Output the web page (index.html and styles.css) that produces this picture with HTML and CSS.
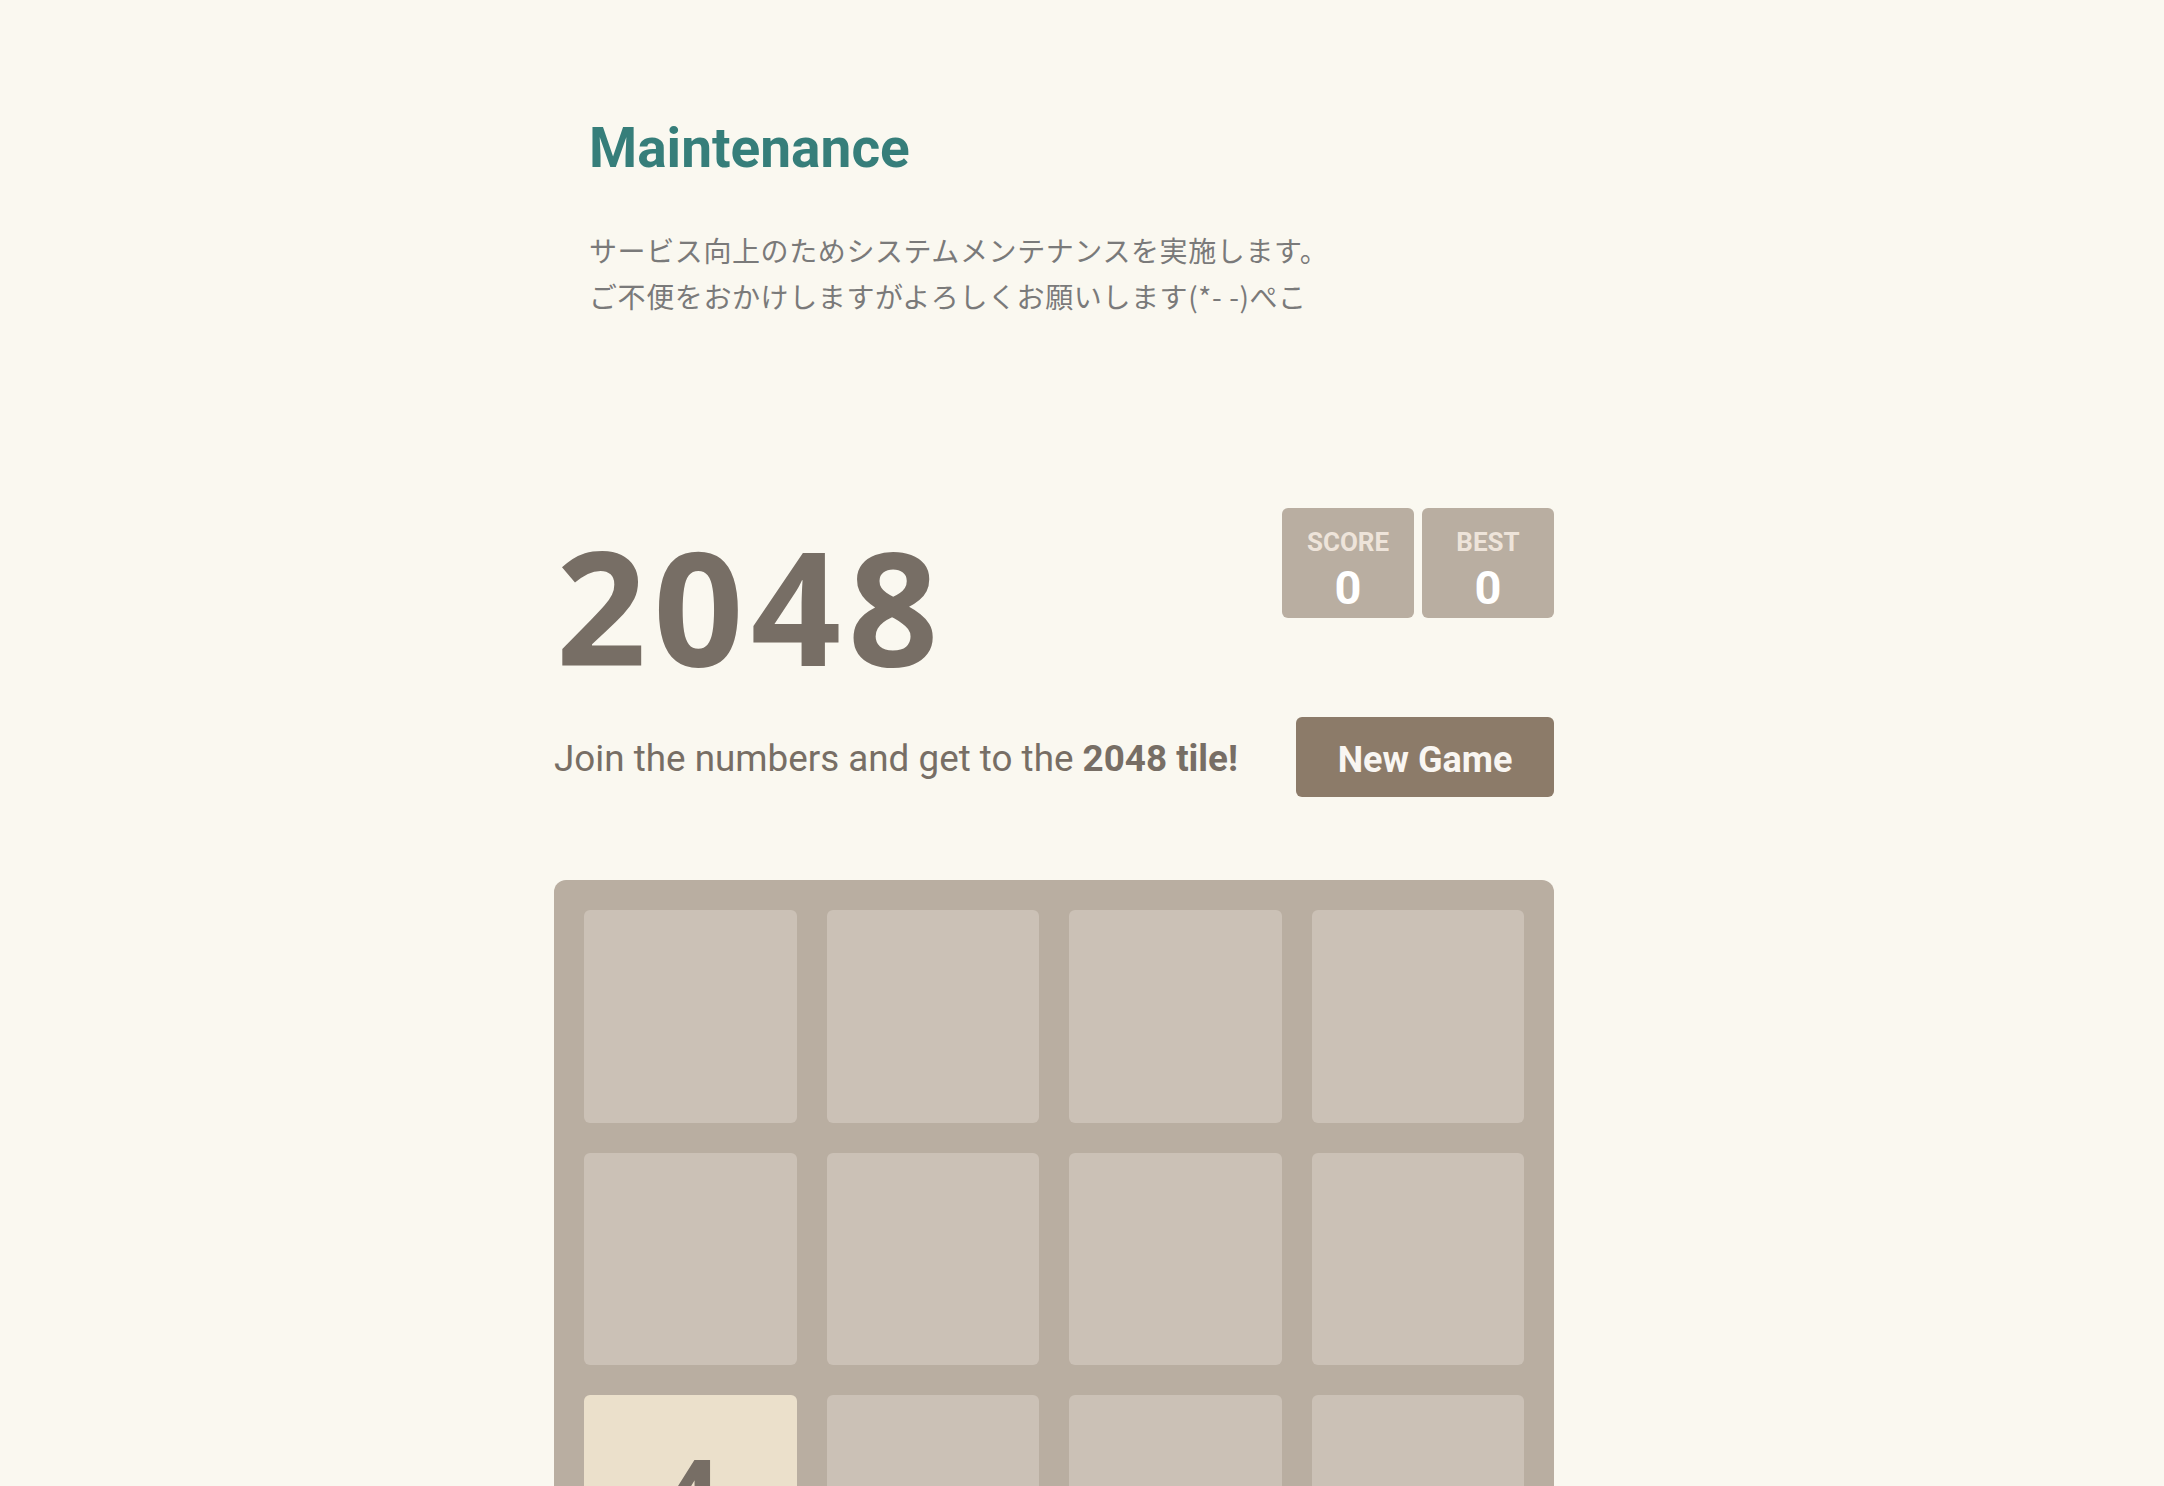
FILE: index.html
```html
<!DOCTYPE html>
<html lang="ja">
<head>
<meta charset="utf-8">
<title>2048 - Maintenance</title>
<link rel="stylesheet" href="styles.css">
</head>
<body>
<section class="maint">
  <h2 class="maint-title">Maintenance</h2>
  <p class="maint-text">サービス向上のためシステムメンテナンスを実施します。<br>ご不便をおかけしますがよろしくお願いします(*- -)ぺこ</p>
</section>
<main class="container">
  <div class="heading">
    <h1 class="title">2048</h1>
    <div class="scores">
      <div class="score-box"><span class="score-label">Score</span><span class="score-value">0</span></div>
      <div class="score-box"><span class="score-label">Best</span><span class="score-value">0</span></div>
    </div>
  </div>
  <div class="above-game">
    <p class="game-intro">Join the numbers and get to the <strong>2048 tile!</strong></p>
    <a class="restart-button">New Game</a>
  </div>
  <div class="game-container">
    <div class="cell"></div><div class="cell"></div><div class="cell"></div><div class="cell"></div>
    <div class="cell"></div><div class="cell"></div><div class="cell"></div><div class="cell"></div>
    <div class="cell tile-4">4</div><div class="cell"></div><div class="cell"></div><div class="cell"></div>
    <div class="cell"></div><div class="cell"></div><div class="cell"></div><div class="cell"></div>
  </div>
</main>
</body>
</html>
```
FILE: styles.css
```css
html, body {
  margin: 0;
  padding: 0;
  overflow: hidden;
  background: #faf8f0;
  color: #776e65;
  font-family: Roboto, "Liberation Sans", sans-serif;
  font-size: 36px;
}

.maint {
  margin-left: 589px;
  padding-top: 111px;
}

.maint-title {
  margin: 0;
  font-size: 55px;
  line-height: 74px;
  font-weight: 700;
  color: #367e7a;
}

.maint-text {
  margin: 42px 0 0;
  font-family: "Noto Sans CJK JP", sans-serif;
  font-size: 28px;
  line-height: 1.65;
  letter-spacing: 0.6px;
  color: #7a7a7a;
}

.container {
  width: 1000px;
  margin: 173px 0 0 554px;
}

.heading {
  display: flex;
  justify-content: space-between;
  align-items: flex-start;
}

.title {
  margin: 5px 0 0 2px;
  font-family: "Open Sans", Roboto, sans-serif;
  font-size: 158px;
  line-height: normal;
  font-weight: 700;
  letter-spacing: 7px;
}

.scores {
  display: flex;
  gap: 8px;
  margin-top: 16px;
}

.score-box {
  width: 132px;
  height: 110px;
  box-sizing: border-box;
  border-radius: 6px;
  background: #b9aea1;
  display: flex;
  flex-direction: column;
  align-items: center;
  font-weight: 700;
}

.score-label {
  margin-top: 21px;
  font-size: 26px;
  line-height: 26px;
  text-transform: uppercase;
  color: #eee4da;
}

.score-value {
  margin-top: 9px;
  font-size: 47px;
  line-height: 47px;
  color: #ffffff;
}

.above-game {
  display: flex;
  justify-content: space-between;
  align-items: flex-start;
  margin-top: 5px;
}

.game-intro {
  margin: 0;
  font-size: 36.8px;
  line-height: 84px;
}

.game-intro strong {
  font-weight: 700;
}

.restart-button {
  display: block;
  width: 258px;
  height: 80px;
  box-sizing: border-box;
  padding-top: 3px;
  border-radius: 6px;
  background: #8c7b69;
  color: #f9f6f2;
  font-size: 36px;
  font-weight: 700;
  line-height: 80px;
  text-align: center;
  text-decoration: none;
}

.game-container {
  margin-top: 79px;
  width: 1000px;
  height: 1000px;
  box-sizing: border-box;
  padding: 30px;
  border-radius: 12px;
  background: #b9aea1;
  display: grid;
  grid-template-columns: repeat(4, 1fr);
  grid-template-rows: repeat(4, 1fr);
  gap: 30px;
}

.cell {
  border-radius: 6px;
  background: #cbc1b6;
}

.tile-4 {
  background: #ebe0cb;
  color: #776e65;
  font-size: 110px;
  font-weight: 700;
  text-align: center;
  line-height: 212px;
}
```
